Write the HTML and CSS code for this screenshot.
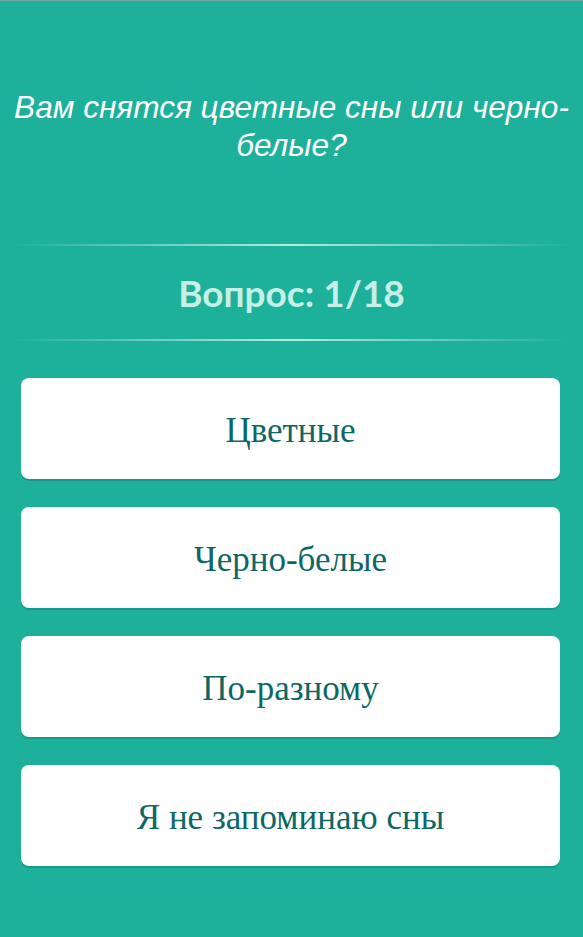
FILE: index.html
```html
<!DOCTYPE html>
<html lang="ru">
<head>
<meta charset="utf-8">
<link rel="stylesheet" href="styles.css">
</head>
<body>
<div class="page">
  <div class="question">Вам снятся цветные сны или черно-белые?</div>
  <div class="divider"></div>
  <div class="counter">Вопрос: 1/18</div>
  <div class="divider"></div>
  <div class="answers">
    <div class="answer">Цветные</div>
    <div class="answer">Черно-белые</div>
    <div class="answer">По-разному</div>
    <div class="answer">Я не запоминаю сны</div>
  </div>
</div>
</body>
</html>
```
FILE: styles.css
```css
html, body {
  margin: 0;
  padding: 0;
  background: #1db09a;
}
.page {
  min-height: 937px;
  box-sizing: border-box;
  border-top: 1px solid #72a8a2;
  background: #1db09a;
  display: flex;
  flex-direction: column;
}
.question {
  font-family: "Liberation Sans", Arial, sans-serif;
  font-style: italic;
  font-size: 31.6px;
  line-height: 38px;
  color: #ffffff;
  text-align: center;
  padding: 87px 4px 0;
  height: 156px;
}
.divider {
  height: 2px;
  margin: 0 10px;
  background: linear-gradient(to right, rgba(200,240,232,0) 0%, rgba(200,240,232,0.9) 50%, rgba(200,240,232,0) 100%);
}
.counter {
  font-family: Lato, "Open Sans", sans-serif;
  font-weight: 700;
  font-size: 37px;
  color: #c6efe6;
  text-align: center;
  height: 93px;
  line-height: 93px;
}
.answers {
  display: flex;
  flex-direction: column;
  gap: 28px;
  padding: 37px 23px 0 21px;
}
.answer {
  height: 101px;
  padding-top: 4px;
  box-sizing: border-box;
  background: #ffffff;
  border-radius: 8px;
  box-shadow: 0 2px 0 #17998a;
  display: flex;
  align-items: center;
  justify-content: center;
  font-family: "Liberation Serif", "Times New Roman", serif;
  font-size: 35px;
  color: #0d6764;
}
```
